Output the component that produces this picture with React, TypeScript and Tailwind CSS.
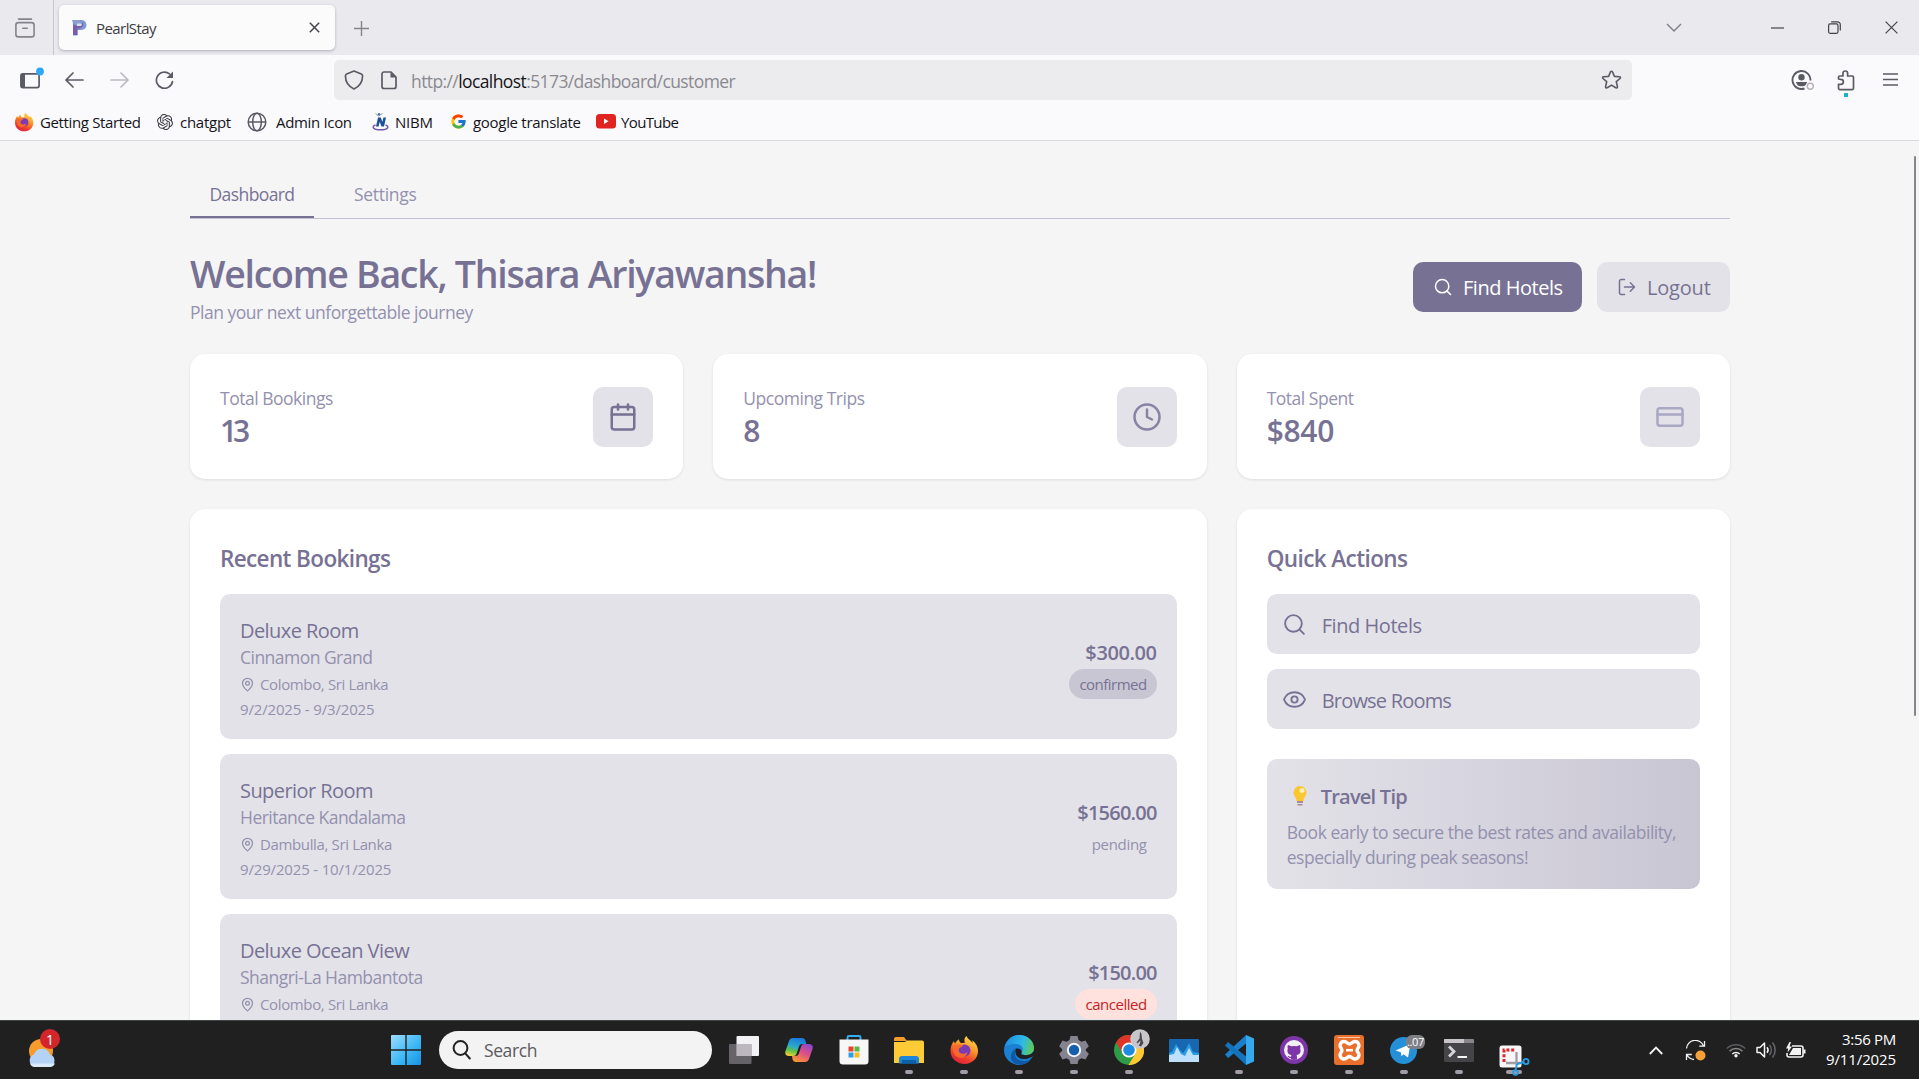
import type { ReactNode } from "react";
import { Calendar, Clock, CreditCard, Eye, MapPin, Search } from "lucide-react";
import { FcGoogle } from "react-icons/fc";
import { SiOpenai } from "react-icons/si";
import { FaGithubAlt } from "react-icons/fa";

/* ---------- shared drawings ---------- */

function Firefox({ size, id }: { size: number; id: string }) {
  return (
    <svg width={size} height={size} viewBox="0 0 30 30">
      <defs>
        <linearGradient id={id} x1="0.8" y1="0" x2="0.3" y2="1">
          <stop offset="0" stopColor="#ffe14a" />
          <stop offset="0.4" stopColor="#fb9a2c" />
          <stop offset="0.75" stopColor="#f0402c" />
          <stop offset="1" stopColor="#d91f3c" />
        </linearGradient>
      </defs>
      <path
        d="M17.5 1c1 3 4 4 6 7 .2-1 0-2-.3-2.700C27 8 29 12 29 16c0 7.500-6 13-13.500 13S1.500 23.500 1.500 16c0-4 1.200-7.500 3.500-10 .2 1.200.6 2 1.200 2.600C7 6.500 8.500 5 10 4.300c0 1.700.8 3 2 3.700 2 .2 3-.2 4-.4C14.700 5.500 15.500 2.500 17.500 1z"
        fill={`url(#${id})`}
      />
      <circle cx="15.500" cy="15.500" r="6" fill="#7b3bb5" />
      <path d="M4 12c3-3 7-3 10-1.500-1 2-4 2-4.500 4.500 0 4 6 5 9 2-1 5-6 7-10 5-3-1.500-5-5-4.500-10z" fill="#f5692c" />
    </svg>
  );
}

/* ---------- browser chrome ---------- */

function TabStrip() {
  return (
    <div className="flex h-[55px] shrink-0 items-center bg-[#eae9ee] text-[#5b5b66]">
      <div className="flex h-full w-[54px] items-center border-r border-[#c8c6d0] pt-px pl-[15px]">
        <svg width="20" height="20" viewBox="0 0 20 20" fill="none" stroke="#85848d" strokeWidth="1.6" strokeLinecap="round">
          <path d="M3.500 1.100h13" />
          <rect x="0.900" y="4.600" width="18.200" height="14.300" rx="2.500" />
          <path d="M7.800 10.300h4.400" />
        </svg>
      </div>
      <div className="ml-[5px] flex h-[45px] w-[276px] items-center rounded-[5px] bg-[#fbfbfc] pr-[15px] pl-[12px] shadow-[0_1px_3px_rgba(60,60,90,0.35)]">
        <svg width="17" height="17" viewBox="0 0 17 17" className="mr-[8px]">
          <path d="M1.500 1h9a5 5 0 0 1 0 10H6.500v5.500H2V6" fill="#7c9bd6" />
          <path d="M1 1h8v3.500H3z" fill="#8e9fc9" />
          <path d="M2 5c4 3 9 2 10-2 1 4-1 6.500-5.500 6.500V16H2z" fill="#7a5fa8" />
          <path d="M6 4.500h3.500a1.300 1.300 0 0 1 0 2.600H6z" fill="#d9def0" />
        </svg>
        <span className="flex-1 pt-[2px] text-[15px] tracking-[-0.038em] text-[#3c3b42]">PearlStay</span>
        <svg width="11" height="11" viewBox="0 0 11 11" stroke="#45444d" strokeWidth="1.500">
          <path d="M.8.8l9.400 9.400M10.200.8L.8 10.200" />
        </svg>
      </div>
      <svg width="15" height="15" viewBox="0 0 15 15" stroke="#85848d" strokeWidth="1.400" className="mt-[2px] ml-[19px]">
        <path d="M7.500 0v15M0 7.500h15" />
      </svg>
      <div className="flex-1" />
      <svg width="16" height="10" viewBox="0 0 16 10" fill="none" stroke="#85818c" strokeWidth="1.500" className="mr-[89px]">
        <path d="M1 1l7 7 7-7" />
      </svg>
      <svg width="13" height="2" viewBox="0 0 13 2" className="mr-[44px]">
        <path d="M0 1h13" stroke="#44434b" strokeWidth="1.200" />
      </svg>
      <svg width="13" height="13" viewBox="0 0 13 13" fill="none" stroke="#44434b" strokeWidth="1.200" className="mr-[44px]">
        <rect x="0.600" y="2.900" width="9.400" height="9.400" rx="1.500" />
        <path d="M3.200.8h6.300a2.800 2.800 0 0 1 2.800 2.800v6" />
      </svg>
      <svg width="13" height="13" viewBox="0 0 13 13" stroke="#44434b" strokeWidth="1.200" className="mr-[21px]">
        <path d="M.6.600l11.800 11.800M12.400.600L.6 12.400" />
      </svg>
    </div>
  );
}

function NavBar() {
  return (
    <div className="flex h-[50px] shrink-0 items-center text-[#5b5b66]">
      <svg width="26" height="24" viewBox="0 0 26 24" className="mb-[2px] ml-[18px]">
        <rect x="2.900" y="6.900" width="18.200" height="13.700" rx="2" fill="none" stroke="#5b5b66" strokeWidth="1.700" />
        <path d="M3 7h4v13.500H3z" fill="#5b5b66" />
        <circle cx="22" cy="4.500" r="3.900" fill="#2ea8f5" />
      </svg>
      <svg width="19" height="16" viewBox="0 0 19 16" fill="none" stroke="#5b5b66" strokeWidth="1.700" strokeLinecap="round" strokeLinejoin="round" className="ml-[21px]">
        <path d="M8 1L1 8l7 7M1 8h17" />
      </svg>
      <svg width="19" height="16" viewBox="0 0 19 16" fill="none" stroke="#bcbac2" strokeWidth="1.700" strokeLinecap="round" strokeLinejoin="round" className="ml-[26px]">
        <path d="M11 1l7 7-7 7M18 8H1" />
      </svg>
      <svg width="19" height="18" viewBox="0 0 19 18" className="ml-[26px]">
        <path d="M17.500 10.500A8.100 8.100 0 1 1 14.500 2.800" fill="none" stroke="#5b5b66" strokeWidth="1.700" strokeLinecap="round" />
        <path d="M18 .500v6.500h-6.500z" fill="#5b5b66" />
      </svg>
      <div className="ml-[160px] flex h-10 w-[1298px] items-center rounded-[5px] bg-[#ececee] pr-[10px] pl-[10px]">
        <svg width="20" height="20" viewBox="0 0 20 20" fill="none" stroke="#5b5b66" strokeWidth="1.700" strokeLinejoin="round">
          <path d="M10 1l7.300 3c1 .5 1.400 1 1.300 2-.2 6.500-3 10.500-8.600 13C4.400 16.500 1.600 12.500 1.400 6c0-1 .3-1.500 1.300-2z" />
        </svg>
        <svg width="16" height="19" viewBox="0 0 16 19" className="ml-[17px]">
          <path d="M3 1h7l5 5v9.500a2 2 0 0 1-2 2H3a2 2 0 0 1-2-2V3a2 2 0 0 1 2-2z" fill="none" stroke="#5b5b66" strokeWidth="1.700" />
          <path d="M9.500 1v5.500H15z" fill="#5b5b66" />
        </svg>
        <span className="ml-[14px] flex-1 pt-[3px] text-[17.5px] tracking-[-0.034em] text-[#8a8990]">
          http://<span className="text-[#15141a]">localhost</span>:5173/dashboard/customer
        </span>
        <svg width="21" height="20" viewBox="0 0 21 20" fill="none" stroke="#5b5b66" strokeWidth="1.600" strokeLinejoin="round">
          <path d="M10.500 1.200c.5 0 .8.300 1 .7l1.900 4.500 4.900.4c1.400.1 1.500 1 .7 1.700l-3.700 3.200 1.100 4.800c.3 1.300-.5 1.900-1.600 1.200l-4.300-2.600-4.300 2.600c-1.100.7-1.900.1-1.600-1.200l1.100-4.800L2 8.500c-.8-.7-.7-1.600.7-1.700l4.900-.4L9.500 1.900c.2-.4.500-.7 1-.7z" />
        </svg>
      </div>
      <div className="flex-1" />
      <svg width="24" height="22" viewBox="0 0 24 22" className="mr-[22px]">
        <path d="M19.500 11.500a9 9 0 1 0-6 8" fill="none" stroke="#5b5b66" strokeWidth="1.900" />
        <circle cx="10.500" cy="8.300" r="3.200" fill="#5b5b66" />
        <path d="M4.800 13h11.400l-1.700 3.200c-1 1.200-6.500 1.400-8 0z" fill="#5b5b66" />
        <circle cx="19.300" cy="17.300" r="3" fill="#fafafc" stroke="#b9afb8" strokeWidth="1.400" />
      </svg>
      <div className="relative mr-[28px]">
        <svg width="18" height="21" viewBox="0 0 18 21" fill="none" stroke="#5b5b66" strokeWidth="1.700" strokeLinejoin="round">
          <path d="M1.500 9V7.300a1.300 1.300 0 0 1 1.300-1.300H6V3.300a2.300 2.300 0 0 1 4.600 0V6h4.600a1.300 1.300 0 0 1 1.300 1.300v11a1.300 1.300 0 0 1-1.300 1.300H2.800a1.300 1.300 0 0 1-1.300-1.300v-4h2.400a2.500 2.500 0 0 0 0-5z" />
        </svg>
        <span className="absolute top-[23px] left-[7px] h-1 w-1 bg-[#1fb0c4]" />
      </div>
      <svg width="15" height="13" viewBox="0 0 15 13" stroke="#5b5b66" strokeWidth="1.500" className="mr-[21px] mb-px">
        <path d="M0 1h15M0 6.500h15M0 12h15" />
      </svg>
    </div>
  );
}

function Bookmark({ icon, label, box }: { icon: ReactNode; label: string; box: string }) {
  return (
    <div className={`flex shrink-0 items-center whitespace-nowrap ${box}`}>
      {icon}
      <span className="pt-[2px]">{label}</span>
    </div>
  );
}

function BookmarksBar() {
  return (
    <div className="flex h-[35px] shrink-0 items-center pb-[2px] pl-[14px] text-[15px] text-[#15141a]">
      <Bookmark box="w-[143px] gap-[6px] tracking-[-0.024em]" label="Getting Started" icon={<Firefox size={20} id="ffBookmark" />} />
      <Bookmark box="w-[90px] gap-[7px] tracking-[-0.017em]" label="chatgpt" icon={<SiOpenai size={16} color="#3d3b44" />} />
      <Bookmark
        box="w-[124px] gap-[9px] tracking-[-0.022em]"
        label="Admin Icon"
        icon={
          <svg width="20" height="20" viewBox="0 0 20 20" fill="none" stroke="#5b5b66" strokeWidth="1.500">
            <circle cx="10" cy="10" r="8.800" />
            <ellipse cx="10" cy="10" rx="4.300" ry="8.800" />
            <path d="M1.200 10h17.600" />
          </svg>
        }
      />
      <Bookmark
        box="w-[79px] gap-[5px] tracking-[-0.016em]"
        label="NIBM"
        icon={
          <svg width="19" height="19" viewBox="0 0 19 19">
            <path d="M5 14.500L7 5.500h2.800l1.600 4.500 1-4.500h2.600l-2 9H10.500l-1.800-4.800-1.100 4.800z" fill="#1d4f96" />
            <path d="M4.500 13C0 14.500 2 17.700 9.500 17.700s9.500-3.200 5-4.700" fill="none" stroke="#7156a8" strokeWidth="1.400" />
            <circle cx="8" cy="2.200" r="1.200" fill="#4a6ea6" />
            <path d="M4.500 1.500l3 2.500 4-2.500" fill="none" stroke="#6b83ad" strokeWidth="0.800" />
          </svg>
        }
      />
      <Bookmark box="w-[146px] gap-[6px] tracking-[-0.02em]" label="google translate" icon={<FcGoogle size={17} />} />
      <Bookmark
        box="gap-[5px] tracking-[-0.042em]"
        label="YouTube"
        icon={
          <svg width="20" height="15" viewBox="0 0 20 15">
            <rect width="20" height="14.500" rx="3.500" fill="#e02422" />
            <path d="M8 4.500v5.500l4.600-2.750z" fill="#fff" />
          </svg>
        }
      />
    </div>
  );
}

/* ---------- dashboard ---------- */

function PageHeader() {
  return (
    <>
      <nav className="flex h-12 border-b border-[#c3c0d3] text-[17.5px] leading-[25px]">
        <button className="mr-5 h-[47px] w-[124px] border-b-2 border-[#777294] pt-[2px] text-[#777294] tracking-[-0.034em]">Dashboard</button>
        <button className="h-[48px] px-5 pb-px text-[#9391ae] tracking-[-0.017em]">Settings</button>
      </nav>
      <header className="mt-[30px] flex h-[75px] items-center justify-between">
        <div className="whitespace-nowrap">
          <h1 className="pt-[3px] text-[37.5px] leading-[45px] font-semibold tracking-[-0.034em] text-[#777294]">
            Welcome Back, Thisara Ariyawansha!
          </h1>
          <p className="mt-1 text-[17.5px] leading-[25px] tracking-[-0.028em] text-[#9391ae]">Plan your next unforgettable journey</p>
        </div>
        <div className="flex gap-[15px] text-[20px]">
          <button className="flex h-[50px] w-[169px] items-center gap-[10px] rounded-[10px] bg-[#777294] pl-5 text-white tracking-[-0.024em]">
            <Search size={20} strokeWidth={1.8} />
            <span className="pt-[3px]">Find Hotels</span>
          </button>
          <button className="flex h-[50px] w-[133px] items-center gap-[10px] rounded-[10px] bg-[#e3e2e8] pl-5 text-[#777294] tracking-[-0.010em]">
            <svg width="20" height="20" viewBox="0 0 24 24" fill="none" stroke="currentColor" strokeWidth="1.800" strokeLinecap="round" strokeLinejoin="round">
              <path d="M9 21H5a2 2 0 0 1-2-2V5a2 2 0 0 1 2-2h4" />
              <path d="M16 17l5-5-5-5M21 12H9" />
            </svg>
            <span className="pt-[3px]">Logout</span>
          </button>
        </div>
      </header>
    </>
  );
}

function StatCard({ label, value, icon, tight }: { label: string; value: string; icon: ReactNode; tight?: boolean }) {
  return (
    <div className="flex h-[125px] items-center justify-between rounded-[15px] bg-white px-[30px] shadow-[0_1px_3px_rgba(0,0,0,0.1)]">
      <div>
        <p className="pt-[2px] text-[17.5px] leading-[25px] tracking-[-0.028em] text-[#9391ae]">{label}</p>
        <p className={`mt-px text-[30px] leading-[37px] font-semibold text-[#777294] ${tight ? "tracking-[-0.14em]" : "tracking-[-0.01em]"}`}>
          {value}
        </p>
      </div>
      <div className="flex h-[60px] w-[60px] items-center justify-center rounded-[10px] bg-[#e3e2e8]">{icon}</div>
    </div>
  );
}

const bookings = [
  { room: "Deluxe Room", hotel: "Cinnamon Grand", place: "Colombo, Sri Lanka", dates: "9/2/2025 - 9/3/2025", price: "$300.00", status: "confirmed", badge: "bg-[#c9c6d4] text-[#777294] tracking-[-0.034em]", priceFit: "tracking-[-0.020em]" },
  { room: "Superior Room", hotel: "Heritance Kandalama", place: "Dambulla, Sri Lanka", dates: "9/29/2025 - 10/1/2025", price: "$1560.00", status: "pending", badge: "text-[#9391ae] tracking-[-0.020em]", priceFit: "tracking-[-0.038em]" },
  { room: "Deluxe Ocean View", hotel: "Shangri-La Hambantota", place: "Colombo, Sri Lanka", dates: "", price: "$150.00", status: "cancelled", badge: "bg-[#ffe1de] text-[#c51f1f] tracking-[-0.032em]", priceFit: "tracking-[-0.040em]" },
];

function RecentBookings() {
  return (
    <section className="col-span-2 h-[620px] rounded-[15px] bg-white px-[30px] pt-[31px] shadow-[0_1px_3px_rgba(0,0,0,0.1)]">
      <h2 className="text-[22.5px] leading-[37px] font-semibold tracking-[-0.028em] text-[#777294]">Recent Bookings</h2>
      <div className="mt-[17px] flex flex-col gap-[15px]">
        {bookings.map((b) => (
          <article key={b.room} className="flex h-[145px] items-center justify-between rounded-[10px] bg-[#e3e2e8] px-5">
            <div className="self-start pt-5 text-[15px] leading-5 tracking-[-0.024em] text-[#9391ae]">
              <h3 className="pt-[2px] text-[20px] leading-[29px] tracking-[-0.028em] text-[#777294]">{b.room}</h3>
              <p className="text-[17.5px] leading-[25px] tracking-[-0.030em]">{b.hotel}</p>
              <p className="mt-1 flex items-center gap-[5px]">
                <MapPin size={15} />
                {b.place}
              </p>
              {b.dates && <p className="mt-[5px] tracking-[-0.011em]">{b.dates}</p>}
            </div>
            <div className="flex flex-col items-end pt-[3px]">
              <span className={`pt-px text-[20px] leading-[30px] font-semibold text-[#777294] ${b.priceFit}`}>{b.price}</span>
              <span className={`mt-px flex h-[30px] items-center rounded-full px-[10px] text-[15px] ${b.badge}`}>{b.status}</span>
            </div>
          </article>
        ))}
      </div>
    </section>
  );
}

function QuickActions() {
  return (
    <section className="h-[620px] rounded-[15px] bg-white px-[30px] pt-[31px] shadow-[0_1px_3px_rgba(0,0,0,0.1)]">
      <h2 className="text-[22.5px] leading-[37px] font-semibold tracking-[-0.026em] text-[#777294]">Quick Actions</h2>
      <div className="mt-[17px] flex flex-col gap-[15px] text-[20px] text-[#777294]">
        <button className="flex h-[60px] items-center gap-[15px] rounded-[10px] bg-[#e3e2e8] pl-[15px] tracking-[-0.022em]">
          <Search size={25} strokeWidth={1.8} />
          <span className="pt-[3px]">Find Hotels</span>
        </button>
        <button className="flex h-[60px] items-center gap-[15px] rounded-[10px] bg-[#e3e2e8] pl-[15px] tracking-[-0.040em]">
          <Eye size={25} strokeWidth={1.8} />
          <span className="pt-[3px]">Browse Rooms</span>
        </button>
      </div>
      <div className="mt-[30px] h-[130px] rounded-[10px] bg-linear-to-r from-[#e3e2e8] to-[#c9c6d4] px-5 pt-[23px] whitespace-nowrap">
        <h4 className="flex items-center text-[20px] leading-[30px] font-semibold tracking-[-0.038em] text-[#777294]">
          <svg width="14" height="20" viewBox="0 0 14 20" className="mr-[14px] mb-[2px] ml-[6px]">
            <path d="M7 0a6.500 6.500 0 0 1 6.500 6.500c0 3.500-3 4.500-3 8.500h-7c0-4-3-5-3-8.500A6.500 6.500 0 0 1 7 0z" fill="#fcc62f" />
            <circle cx="9" cy="4.500" r="2.500" fill="#fff3b8" />
            <path d="M4 15h6v2H4zM4.500 18h5v1.500h-5z" fill="#a98a9c" />
          </svg>
          Travel Tip
        </h4>
        <p className="mt-[8px] text-[17.5px] leading-[25px] tracking-[-0.026em] text-[#9391ae]">
          Book early to secure the best rates and availability,
          <br />
          especially during peak seasons!
        </p>
      </div>
    </section>
  );
}

/* ---------- taskbar ---------- */

function TaskIcon({ children, mark }: { children: ReactNode; mark?: string }) {
  return (
    <div className="relative flex h-[58px] w-[55px] shrink-0 items-center justify-center">
      {children}
      {mark && <span className={`absolute bottom-[5px] left-1/2 h-1 -translate-x-1/2 rounded-full bg-[#a39ca6] ${mark}`} />}
    </div>
  );
}

function Taskbar() {
  return (
    <footer className="relative flex h-[59px] shrink-0 items-center border-t border-[#404548] bg-[#202020]">
      <div className="relative mt-[-2px] ml-[27px] h-[38px] w-[34px]">
        <svg width="34" height="38" viewBox="0 0 34 38">
          <circle cx="14" cy="21" r="12" fill="#f79b2d" />
          <path d="M8 37a6.500 6.500 0 0 1-1-12.500 8.500 8.500 0 0 1 16 0A6.500 6.500 0 0 1 22.500 37z" fill="#b5d3f6" />
          <path d="M8 37a6 6 0 0 1-5-3.500h25A6 6 0 0 1 22.500 37z" fill="#dcebfb" />
        </svg>
        <span className="absolute -top-px left-[13px] flex h-5 w-5 items-center justify-center rounded-full bg-[#d3262b] text-[14px] text-white">1</span>
      </div>
      <svg width="30" height="30" viewBox="0 0 30 30" className="ml-[330px]">
        <defs>
          <linearGradient id="win" x1="0" y1="0" x2="1" y2="1">
            <stop offset="0" stopColor="#9fdcfb" />
            <stop offset="0.600" stopColor="#38b6f6" />
            <stop offset="1" stopColor="#1a8fe0" />
          </linearGradient>
        </defs>
        <path d="M1 0h13.300v14.300H0V1a1 1 0 0 1 1-1zM15.700 0H29a1 1 0 0 1 1 1v13.300H15.700zM0 15.700h14.300V30H1a1 1 0 0 1-1-1zM15.700 15.700H30V29a1 1 0 0 1-1 1H15.700z" fill="url(#win)" />
      </svg>
      <div className="ml-[18px] flex h-[38px] w-[273px] items-center rounded-full bg-[#f3f3f3] pl-[13px]">
        <svg width="19" height="20" viewBox="0 0 19 20" fill="none" stroke="#222" strokeWidth="2" strokeLinecap="round">
          <circle cx="8.500" cy="8" r="6.900" />
          <path d="M13.300 13.300l4.500 5.200" />
        </svg>
        <span className="ml-[13px] pt-px text-[17.5px] tracking-[-0.023em] text-[#5c5b60]">Search</span>
      </div>
      <div className="ml-[4px] flex">
        <TaskIcon>
          <svg width="30" height="28" viewBox="0 0 30 28">
            <rect x="7.500" y="0" width="22.500" height="20" rx="1" fill="#f2f1f3" />
            <rect x="0" y="8" width="22.500" height="20" rx="1" fill="#77747a" fillOpacity="0.800" />
            <rect x="7.500" y="8" width="15" height="12" fill="#bdb8bf" />
          </svg>
        </TaskIcon>
        <TaskIcon>
          <svg width="28" height="26" viewBox="0 0 28 26">
            <defs>
              <linearGradient id="cpA" x1="0.500" y1="0" x2="0.200" y2="1">
                <stop offset="0" stopColor="#1c7bdc" />
                <stop offset="0.450" stopColor="#2aa9c9" />
                <stop offset="0.700" stopColor="#5fc24b" />
                <stop offset="1" stopColor="#fbd02e" />
              </linearGradient>
              <linearGradient id="cpB" x1="0.800" y1="0" x2="0.200" y2="1">
                <stop offset="0" stopColor="#8a49c9" />
                <stop offset="0.450" stopColor="#dd4d8a" />
                <stop offset="1" stopColor="#fb9a2c" />
              </linearGradient>
            </defs>
            <path d="M8 1h9c2 0 3 1 3.500 3l.8 3h-4c-2 0-3 1-3.500 3l-2 6c-.5 2-1.500 3-3.500 3H4c-3 0-4.500-2-3.500-5L4 4c.6-2 2-3 4-3z" fill="url(#cpA)" />
            <path d="M20 25h-9c-2 0-3-1-3.500-3L7 19h3.500c2 0 3-1 3.500-3l2-6c.5-2 1.500-3 3.500-3H24c3 0 4.500 2 3.500 5L24 22c-.6 2-2 3-4 3z" fill="url(#cpB)" />
          </svg>
        </TaskIcon>
        <TaskIcon>
          <svg width="30" height="30" viewBox="0 0 30 30">
            <path d="M8.500 6V2.500a1.500 1.500 0 0 1 1.500-1.500h10a1.500 1.500 0 0 1 1.500 1.500V6" fill="none" stroke="#33aef0" strokeWidth="1.900" />
            <path d="M0.500 4.500h29V26a3.500 3.500 0 0 1-3.500 3.500H4A3.500 3.500 0 0 1 .5 26z" fill="#f7f7f8" />
            <path d="M9.500 11.500h5v5h-5z" fill="#e8432d" />
            <path d="M15.500 11.500h5v5h-5z" fill="#57b947" />
            <path d="M9.500 17.500h5v5h-5z" fill="#2c9fe6" />
            <path d="M15.500 17.500h5v5h-5z" fill="#f9bc22" />
          </svg>
        </TaskIcon>
        <TaskIcon mark="w-2">
          <svg width="30" height="27" viewBox="0 0 30 27">
            <path d="M0 2a2 2 0 0 1 2-2h8l3 4H0z" fill="#f29d2c" />
            <path d="M0 5l10.500 0 3-1.500H28a2 2 0 0 1 2 2V26H0z" fill="#fccb35" />
            <path d="M5 26.500V22a3 3 0 0 1 3-3h14a3 3 0 0 1 3 3v4.500z" fill="#1e86d8" />
            <path d="M8 26.500V23h14v3.500z" fill="#0f5fa8" />
          </svg>
        </TaskIcon>
        <TaskIcon mark="w-2">
          <Firefox size={30} id="ffTask" />
        </TaskIcon>
        <TaskIcon mark="w-2">
          <svg width="30" height="30" viewBox="0 0 30 30">
            <defs>
              <linearGradient id="edge" x1="0" y1="0.300" x2="1" y2="0.500">
                <stop offset="0" stopColor="#1d8fe0" />
                <stop offset="0.600" stopColor="#2fb8e8" />
                <stop offset="1" stopColor="#5ecb55" />
              </linearGradient>
            </defs>
            <circle cx="15" cy="15" r="15" fill="#1b7fd2" />
            <path d="M1 12C3 4 9 0 15 0c9 0 15 6 15 13 0 5-4 7-8 7-3 0-5-1-4.500-2.500C21 13 17 9 11 9 6 9 2 11 1 12z" fill="url(#edge)" />
            <path d="M11 19c0 6 7 9 15.500 5.500C23 30 15 31 10 28 5 25 6 17 12 13c-1 2-1 4-1 6z" fill="#0f5aa6" />
            <path d="M12 13.500c-2 5 1 10.500 8 10.500 3 0 5-.6 8-2.300L30 20l0-4-3 3c-3 1.600-8 1.500-10 0 2-2.500 0-6-5-5.500z" fill="#202020" />
          </svg>
        </TaskIcon>
        <TaskIcon mark="w-2">
          <svg width="30" height="30" viewBox="0 0 30 30">
            <path d="M11.500 1h7l1 4 3 1.700 4-1.200 3.300 5.800-3 3v1.400l3 3-3.300 5.800-4-1.200-3 1.700-1 4h-7l-1-4-3-1.700-4 1.200L.2 18.700l3-3v-1.400l-3-3 3.300-5.800 4 1.200 3-1.700z" fill="#85838f" />
            <circle cx="15" cy="15" r="7.200" fill="#f3f5fa" />
            <circle cx="15" cy="15" r="5.200" fill="#155fae" />
          </svg>
        </TaskIcon>
        <TaskIcon mark="w-2">
          <svg width="30" height="30" viewBox="0 0 30 30">
            <circle cx="15" cy="15" r="15" fill="#2d9b48" />
            <path d="M2 7.500A15 15 0 0 1 28 7.500L29 9H15l-6.500 9z" fill="#de3527" />
            <path d="M29 9A15 15 0 0 1 14.500 30l7-11.500L21 9z" fill="#fcc934" />
            <circle cx="15" cy="15" r="7.500" fill="#fff" />
            <circle cx="15" cy="15" r="5.800" fill="#1d8ce0" />
          </svg>
          <svg width="20" height="20" viewBox="0 0 20 20" className="absolute top-[8px] left-[29px]">
            <circle cx="10" cy="10" r="9.800" fill="#c9c6cb" />
            <path d="M10 2.500l1.500 2.500 .5 5 1.500 4-2.500 3.500-2.500-1 1.500-2 .5-3-3 3-1-1 3-4z" fill="#4b494d" />
          </svg>
        </TaskIcon>
        <TaskIcon>
          <svg width="30" height="23" viewBox="0 0 30 23">
            <rect width="30" height="23" rx="1" fill="#1767b1" />
            <path d="M0 14l3-1 4-8 4 6 3 3 3-4 3-6 4 9 6 1v9H0z" fill="#2b9be4" />
            <path d="M0 16l5-1 3-7 4 7 4 2 4-8 4 7 6 0v7H0z" fill="#bfe0fa" />
          </svg>
        </TaskIcon>
        <TaskIcon mark="w-2">
          <svg width="30" height="30" viewBox="0 0 30 30">
            <path d="M1 19.500L22 0l2 7L4 23z" fill="#1b80cc" />
            <path d="M1 10.500L4 7l20 16-2 7z" fill="#1473bd" />
            <path d="M22 0l8 3.500v23L22 30z" fill="#36a9ee" />
          </svg>
        </TaskIcon>
        <TaskIcon mark="w-2">
          <span className="flex h-7 w-7 items-center justify-center rounded-full bg-[#7d35a8]">
            <span className="flex h-[20px] w-[20px] items-end justify-center overflow-hidden rounded-full bg-[#f3f0f5]">
              <svg width="16" height="17" viewBox="0 0 16 17" fill="#7d35a8">
                <path d="M2 2l3.500 1.300a10 10 0 0 1 5 0L14 2c.6 1.500.5 2.500.2 3.500 1 3.500-.2 6-3.700 6.500.5.800.5 1.500.5 5H5v-2c-2 .5-2.500-1-3.500-2 1.500-.3 2 1 3.500.7 0-.7.200-1.200.5-1.700C2 11.500.8 9 1.800 5.500 1.500 4.500 1.400 3.500 2 2z" />
              </svg>
            </span>
          </span>
        </TaskIcon>
        <TaskIcon mark="w-2">
          <svg width="30" height="30" viewBox="0 0 30 30">
            <rect width="30" height="30" rx="3" fill="#e8702c" />
            <path d="M4 2.500h22" stroke="#fbc9a4" strokeWidth="1" />
            <path
              d="M10 6.500c3 0 3.500 2.500 5.500 2.500s2.500-2.500 5.500-2.500c3.500 0 5 4 3 6.500-1.200 1.500-1.200 3 0 4.500 2 2.500.5 6.500-3 6.500-3 0-3.500-2.500-5.500-2.500S13 24 10 24c-3.500 0-5-4-3-6.500 1.200-1.500 1.200-3 0-4.500-2-2.500-.5-6.500 3-6.500z"
              fill="none"
              stroke="#fff"
              strokeWidth="3.400"
            />
            <path d="M12 15.200h7" stroke="#fff" strokeWidth="2.600" />
          </svg>
        </TaskIcon>
        <TaskIcon mark="w-2">
          <svg width="27" height="27" viewBox="0 0 27 27">
            <circle cx="13.500" cy="13.500" r="13.500" fill="#2490d8" />
            <path d="M5.500 13.500L20.500 7 18 20.500l-4.500-3.300-2 2-.7-4z" fill="#fff" />
          </svg>
          <span className="absolute top-[14px] left-[30px] flex h-[14px] w-[19px] items-center justify-center rounded-[6px] bg-[#7f7f86] text-[11px] tracking-[-0.030em] text-white">..07</span>
        </TaskIcon>
        <TaskIcon mark="w-2">
          <svg width="30" height="23" viewBox="0 0 30 23">
            <rect width="30" height="23" rx="1.500" fill="#454448" />
            <path d="M1 0h28a1 1 0 0 1 1 1v3H0V1a1 1 0 0 1 1-1z" fill="#8a858c" />
            <path d="M1 0h19v4H0V1a1 1 0 0 1 1-1z" fill="#c9c5cb" />
            <path d="M5 7.500l5 5-5 5" fill="none" stroke="#d7d5d9" strokeWidth="2.800" />
            <path d="M13.500 18h9.500" stroke="#f4f4f5" strokeWidth="2" />
          </svg>
        </TaskIcon>
        <TaskIcon mark="w-4">
          <svg width="32" height="31" viewBox="0 0 32 31" className="relative top-[10px] z-10">
            <rect x="1.500" y="0.500" width="22" height="22" rx="2.500" fill="#f7f6f8" />
            <path d="M6 17V5h12" fill="none" stroke="#d82a2a" strokeWidth="3" strokeDasharray="3 1.800" />
            <path d="M18.500 7v13M8 18h14" stroke="#a29ca5" strokeWidth="2.300" />
            <circle cx="28" cy="16.500" r="2.600" fill="none" stroke="#2b9be4" strokeWidth="1.900" />
            <circle cx="17.500" cy="27.500" r="2.300" fill="none" stroke="#2b9be4" strokeWidth="1.900" />
            <path d="M19 19l7-2M19 19l-1.500 6" stroke="#2b9be4" strokeWidth="1.900" />
          </svg>
        </TaskIcon>
      </div>
      <div className="flex-1" />
      <svg width="14" height="9" viewBox="0 0 14 9" fill="none" stroke="#f2f2f2" strokeWidth="1.800" className="mr-[22px]">
        <path d="M.8 8L7 1.600 13.200 8" />
      </svg>
      <svg width="22" height="21" viewBox="0 0 22 21" className="mr-[19px]">
        <path d="M1.500 8.500A8.800 8.800 0 0 1 18.500 6M19.500 1v5.200h-5.300M1.500 20v-5.500h5.300M1.800 14.800A9 9 0 0 0 9 19.500" fill="none" stroke="#f2f2f2" strokeWidth="1.300" />
        <circle cx="15.500" cy="15.500" r="5" fill="#f6a03a" />
      </svg>
      <svg width="20" height="16" viewBox="0 0 20 16" fill="none" strokeWidth="1.500" className="mr-[10px]">
        <path d="M.8 6.500a13 13 0 0 1 18.400 0" stroke="#5c5b60" />
        <path d="M3.500 9.300a9.200 9.200 0 0 1 13 0" stroke="#8a898e" />
        <path d="M6.300 12a5.200 5.200 0 0 1 7.400 0" stroke="#f2f2f2" />
        <circle cx="10" cy="13.800" r="1.700" fill="#f2f2f2" />
      </svg>
      <svg width="21" height="18" viewBox="0 0 21 18" fill="none" strokeWidth="1.500" className="mr-[9px]">
        <path d="M1 6.500h3L8.500 2v14L4 11.500H1z" stroke="#f2f2f2" strokeLinejoin="round" />
        <path d="M11 6.200a4.500 4.500 0 0 1 0 5.600" stroke="#f2f2f2" />
        <path d="M13.500 4a8 8 0 0 1 0 10M16.500 1.500a12 12 0 0 1 0 15" stroke="#66656a" />
      </svg>
      <svg width="20" height="17" viewBox="0 0 20 17" className="mr-[20px]">
        <path d="M6 4h9a2 2 0 0 1 2 2v7a2 2 0 0 1-2 2H3a2 2 0 0 1-2-2v-2" fill="none" stroke="#f2f2f2" strokeWidth="1.600" />
        <path d="M7 6h8v7H3z" fill="#f2f2f2" />
        <path d="M17.500 7.500h2v4h-2z" fill="#f2f2f2" />
        <path d="M3.500 0L0 6.500h2.200L1.500 10.500 6 4.500H3.500L5 0z" fill="#f2f2f2" />
      </svg>
      <div className="mr-[23px] pb-[2px] text-right text-[15px] leading-5 text-white">
        <p className="tracking-[-0.020em]">3:56 PM</p>
        <p className="tracking-[-0.008em]">9/11/2025</p>
      </div>
    </footer>
  );
}

export default function App() {
  return (
    <div className="flex h-[1079px] w-[1919px] flex-col overflow-hidden bg-[#fafafc] font-['Open_Sans','Noto_Sans',sans-serif]">
      <TabStrip />
      <NavBar />
      <BookmarksBar />
      <main className="relative min-h-0 flex-1 overflow-hidden border-t border-[#d9d8df] bg-[#f5f5f6] pt-[30px] pl-[190px]">
        <div className="w-[1540px]">
          <PageHeader />
          <div className="mt-[30px] grid grid-cols-3 gap-[30px]">
            <StatCard label="Total Bookings" value="13" tight icon={<Calendar size={30} color="#777294" strokeWidth={2} />} />
            <StatCard label="Upcoming Trips" value="8" icon={<Clock size={30} color="#8683a3" strokeWidth={2} />} />
            <StatCard label="Total Spent" value="$840" icon={<CreditCard size={30} color="#a9a8c2" strokeWidth={2} />} />
            <RecentBookings />
            <QuickActions />
          </div>
        </div>
        <span className="absolute top-[15px] right-[3px] h-[560px] w-[2px] rounded-full bg-[#86858b]" />
      </main>
      <Taskbar />
    </div>
  );
}
